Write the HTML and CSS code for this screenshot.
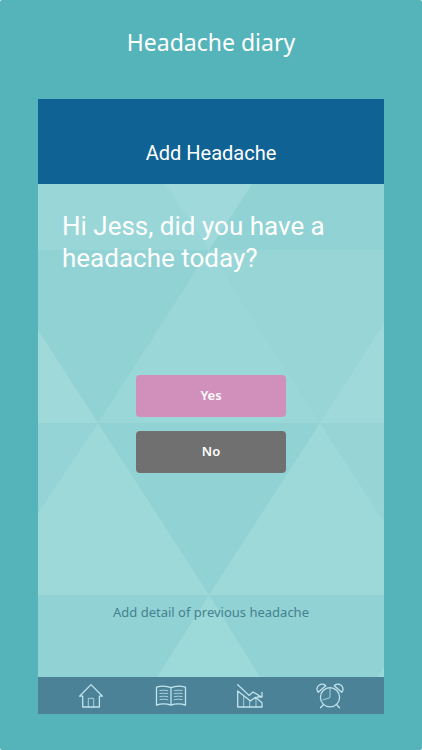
FILE: index.html
```
<!DOCTYPE html>
<html lang="en">
<head>
<meta charset="UTF-8">
<meta name="viewport" content="width=device-width, initial-scale=1">
<title>Headache diary</title>
<link rel="stylesheet" href="styles.css">
</head>
<body>

<div class="page">
    <h1 class="page-title">Headache diary</h1>

    <div class="phone">
        <header class="app-header">
            <h2>Add Headache</h2>
        </header>

        <main class="content">
            <svg class="pattern" viewBox="0 0 346 493" preserveAspectRatio="none" aria-hidden="true">
                <rect width="346" height="493" fill="#91d2d4"/>
                <path d="M0 0H127L171 66H0z" fill="#99d6d8"/>
                <path d="M127 0H214L171 66z" fill="#a0d9db"/>
                <path d="M171 66H346V139L282 239z" fill="#97d5d7"/>
                <path d="M171 66L282 239H60z" fill="#9ad7d8"/>
                <path d="M0 146L60 239H0zM346 139V239H282z" fill="#9fd9da"/>
                <path d="M282 239H346V338z" fill="#97d4d6"/>
                <path d="M0 239H60L0 329z" fill="#95d4d6"/>
                <path d="M60 239L171 411H0V329zM282 239L346 338V411H171z" fill="#9dd9d9"/>
                <path d="M171 411L222 493H119zM346 483V493H340z" fill="#9cd9d9"/>
            </svg>

            <p class="question">Hi Jess, did you have a headache today?</p>

            <div class="answers">
                <button type="button" class="btn btn-yes">Yes</button>
                <button type="button" class="btn btn-no">No</button>
            </div>

            <a class="previous" href="#previous">Add detail of previous headache</a>
        </main>

        <nav class="tabs">
            <a href="#home" aria-label="Home">
                <svg viewBox="0 0 32 28">
                    <path d="M7.7 14.2H4.6L16 2.6l11.4 11.6h-3V25H7.7z"/>
                    <path class="thin" d="M13.3 25v-8.7h5.4V25"/>
                </svg>
            </a>
            <a href="#diary" aria-label="Diary">
                <svg viewBox="0 0 32 28">
                    <path d="M16 5.7C12 3.9 5.5 3.9 1.5 5.2v18c4-1.6 10.5-1.6 14.5 0 4-1.6 10.5-1.6 14.5 0v-18C26.5 3.9 20 3.9 16 5.7zM16 5.7v17.5"/>
                    <path class="thin" d="M4.8 8.5q4-.8 8 .2M4.8 11.5q4-.8 8 .2M4.8 14.5q4-.8 8 .2M4.8 17.5q4-.8 8 .2M19.2 8.7q4-1 8-.2M19.2 11.7q4-1 8-.2M19.2 14.7q4-1 8-.2M19.2 17.7q4-1 8-.2"/>
                </svg>
            </a>
            <a href="#trends" aria-label="Trends">
                <svg viewBox="0 0 32 28">
                    <path d="M3.7 2.7L15 13.4l4-3.4 8.5 5M28 10.5V15h-4.7"/>
                    <path d="M3.7 9v16H28v-4.3l-6.5-5.4-5 3.6z"/>
                    <path class="thin" d="M9.7 14.5V25M15.7 18.5V25M22 16v9"/>
                </svg>
            </a>
            <a href="#reminders" aria-label="Reminders">
                <svg viewBox="0 0 32 28">
                    <circle cx="16" cy="15.3" r="9.6"/>
                    <path d="M4.3 10.3C2.3 8.3 2.6 5 5 3.3c2.3-1.8 5.3-1.6 6.7.4zM27.7 10.3c2-2 1.7-5.3-.7-7-2.3-1.8-5.3-1.6-6.7.4z"/>
                    <path d="M9.5 22.5l-3 3.3M22.5 22.5l3 3.3"/>
                    <path class="thin" d="M16 6v9.6l-7 2.4"/>
                </svg>
            </a>
        </nav>
    </div>
</div>

</body>
</html>
```
FILE: styles.css
```
* {
    box-sizing: border-box;
}

body {
    margin: 0;
    background: #fff;
    color: #fff;
    font-family: "Noto Sans", sans-serif;
}

.page {
    display: flex;
    flex-direction: column;
    min-height: 100vh;
    padding: 24px 38px 36px;
    background: #55b4ba;
    border-radius: 2px;
}

.page-title {
    margin: 0 0 39px;
    font-size: 23px;
    font-weight: 400;
    line-height: 36px;
    text-align: center;
}

.phone {
    display: flex;
    flex: 1;
    flex-direction: column;
}

.app-header {
    padding: 40px 16px 17px;
    background: #0f6294;
}

.app-header h2 {
    margin: 0;
    font-family: Roboto, sans-serif;
    font-size: 20px;
    font-weight: 400;
    line-height: 28px;
    text-align: center;
}

.content {
    position: relative;
    z-index: 0;
    display: flex;
    flex: 1;
    flex-direction: column;
    align-items: center;
    padding: 26px 24px 53px;
}

/* triangles behind the text */
.pattern {
    position: absolute;
    inset: 0;
    z-index: -1;
    width: 100%;
    height: 100%;
}

.question {
    align-self: stretch;
    margin: 0;
    font-family: Roboto, sans-serif;
    font-size: 26px;
    font-weight: 400;
    line-height: 32px;
}

.answers {
    display: flex;
    flex-direction: column;
    gap: 14px;
    margin: 101px 0 auto;
}

.btn {
    width: 150px;
    height: 42px;
    padding: 0 0 2px;
    border: 0;
    border-radius: 4px;
    color: #fff;
    font-family: inherit;
    font-size: 13px;
    font-weight: 600;
}

.btn-yes {
    background: #d190bb;
}

.btn-no {
    background: #707070;
}

.previous {
    color: #45818f;
    font-size: 13px;
    line-height: 24px;
    text-decoration: none;
}

.tabs {
    display: grid;
    grid-template-columns: repeat(4, 1fr);
    padding: 0 14px 0 13px;
    background: #4c8298;
}

.tabs a {
    display: flex;
    align-items: center;
    justify-content: center;
    height: 37px;
}

.tabs svg {
    width: 32px;
    height: 28px;
    fill: none;
    stroke: #c0e3ec;
    stroke-width: 1.3;
    stroke-linejoin: round;
    stroke-linecap: round;
}

.tabs .thin {
    stroke-width: 1;
    opacity: 0.8;
}
```
